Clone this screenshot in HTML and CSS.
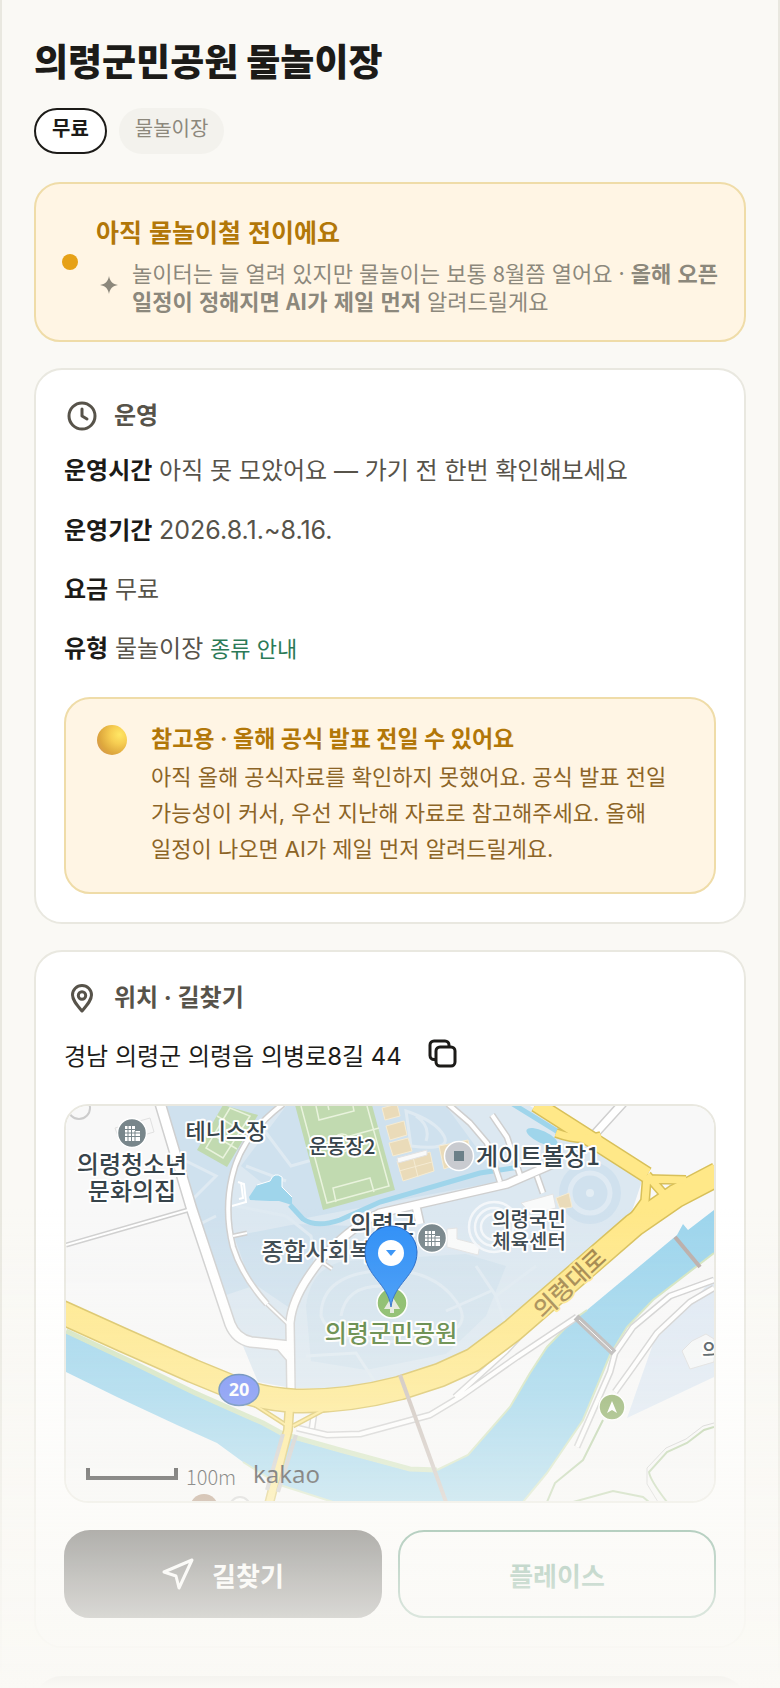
FILE: index.html
```html
<!DOCTYPE html>
<html lang="ko">
  <head>
    <meta charset="UTF-8" />
    <meta name="viewport" content="width=device-width, initial-scale=1.0" />
    <title>의령군민공원 물놀이장</title>
    <link rel="stylesheet" href="styles.css" />
  </head>
  <body>
    <main class="page">
      <h1>의령군민공원 물놀이장</h1>
      <div class="chips">
        <span class="chip chip-free">무료</span>
        <span class="chip">물놀이장</span>
      </div>

      <!-- 운영 상태 -->
      <section class="status">
        <span class="status-dot"></span>
        <div class="status-body">
          <h2>아직 물놀이철 전이에요</h2>
          <div class="status-note">
            <svg class="sparkle" viewBox="0 0 16 16" aria-hidden="true">
              <path d="M8 0C8.900 4.800 11.200 7.100 16 8C11.200 8.900 8.900 11.200 8 16C7.100 11.200 4.800 8.900 0 8C4.800 7.100 7.100 4.800 8 0Z" fill="currentColor" />
            </svg>
            <p>놀이터는 늘 열려 있지만 물놀이는 보통 8월쯤 열어요 · <b>올해 오픈 일정이 정해지면 AI가 제일 먼저</b> 알려드릴게요</p>
          </div>
        </div>
      </section>

      <!-- 운영 정보 -->
      <section class="card">
        <h2 class="card-title">
          <svg class="icon" viewBox="0 0 36 36" aria-hidden="true">
            <circle cx="18" cy="18" r="13" />
            <path d="M18 11v7l5 3" />
          </svg>
          운영
        </h2>
        <ul class="info">
          <li><b>운영시간</b> 아직 못 모았어요 — 가기 전 한번 확인해보세요</li>
          <li><b>운영기간</b> <span class="period">2026.8.1.~8.16.</span></li>
          <li><b>요금</b> 무료</li>
          <li><b>유형</b> 물놀이장 <a href="#types">종류 안내</a></li>
        </ul>
        <div class="notice">
          <span class="ball"></span>
          <div>
            <h3>참고용 · 올해 공식 발표 전일 수 있어요</h3>
            <p>아직 올해 공식자료를 확인하지 못했어요. 공식 발표 전일 가능성이 커서, 우선 지난해 자료로 참고해주세요. 올해 일정이 나오면 AI가 제일 먼저 알려드릴게요.</p>
          </div>
        </div>
      </section>

      <!-- 위치 -->
      <section class="card">
        <h2 class="card-title">
          <svg class="icon" viewBox="0 0 36 36" aria-hidden="true">
            <path d="M18 31C12.500 24.500 8.500 20 8.500 15a9.500 9.500 0 0 1 19 0C27.500 20 23.500 24.500 18 31Z" />
            <circle cx="18" cy="15.500" r="3.700" />
          </svg>
          위치 · 길찾기
        </h2>
        <div class="address">
          <span>경남 의령군 의령읍 의병로8길 44</span>
          <button type="button" class="copy" aria-label="주소 복사">
            <svg viewBox="0 0 30 30" aria-hidden="true">
              <path d="M7 20.500H6a4 4 0 0 1-4-4V6a4 4 0 0 1 4-4h11a4 4 0 0 1 4 4v1" />
              <rect x="8" y="8" width="19" height="19" rx="4" />
            </svg>
          </button>
        </div>

        <div class="map">
          <svg viewBox="0 0 648 395" role="img" aria-label="지도">
            <rect width="648" height="395" fill="#f8f8f8" />
            <!-- 공원 -->
            <path d="M95 0 126 104 157 200 172 228 192 276 226 282 271 282 334 272 377 257 411 239 447 211 564 111 577 72 464 0Z" fill="#dce8f1" />
            <path d="M98 0H215L184 27 166 71 162 97 167 141 184 181 157 190 126 104Z M230 118 290 120 254 157 228 205 184 175 168 130Z M175 60 220 0H380L435 75 240 112Z" fill="#cfe1ee" />
            <path d="M240 200Q245 160 280 155L400 148 440 160 420 210 380 248 300 264 245 255Z" fill="#d3e3ee" />
            <g fill="none" stroke="#dfeaf2" stroke-width="3">
              <path d="M120 100 150 70 120 55M150 110 130 120M195 20 225 60 260 50M180 60 220 75M220 110 245 130 250 160M170 100 220 110M255 210Q255 170 310 165T390 195 340 235 255 210ZM275 210Q280 178 320 180M240 250 290 247 315 285M410 160 430 190 470 160M425 185 380 205M430 190 440 220M340 5Q370 15 378 30T345 40ZM350 10Q365 20 360 35" />
            </g>
            <circle cx="524" cy="87" r="31" fill="#d0e1ee" />
            <circle cx="524" cy="87" r="20" fill="none" stroke="#dfeaf3" stroke-width="5" />
            <circle cx="524" cy="87" r="4" fill="#e3edf4" />
            <path d="M561 312 648 271V171L626 196 588 235Z" fill="#dfe9f4" />
            <!-- 강과 개울 -->
            <path d="M0 227 66 258 127 288 197 319 217 330 274 346 344 365 371 364 402 349 444 301 464 267 481 241 507 214 521 204 611 129 617 118 622 124 648 104V147L587 194 561 221 544 249 517 314 481 367 457 396H267L214 379 177 356 151 337 111 319 51 291 0 266Z" fill="#9dd5ed" />
            <path d="M0 225 66 256 127 286 197 317 217 328 274 344 344 363 371 364" fill="none" stroke="#d2e4be" stroke-width="5" />
            <path d="M371 364 402 349 444 301 464 267 481 241 507 214 521 204M648 147 587 194 561 221 544 249 517 314 481 367 457 396M177 356 214 379 267 396" fill="none" stroke="#d2e4be" stroke-width="2" />
            <path d="M224 99 237 113Q250 122 274 114L314 96 414 67 454 61M447 -2 502 32" fill="none" stroke="#9fd5eb" stroke-width="5" />
            <path d="M183 91 191 79 204 75Q208 65 216 71L216 81 226 91V99L213 95 204 95 184 94Z" fill="#9fd5eb" />
            <path d="M191 79 204 75Q208 65 216 71L216 81 226 91" fill="none" stroke="#fff" stroke-width="1" />
            <ellipse cx="476" cy="31" rx="17" ry="6" transform="rotate(25 476 31)" fill="#9fd5eb" />
            <!-- 운동장, 코트 -->
            <path d="M229 -1H306L329 84 257 104Z" fill="#c1dab0" />
            <g fill="none" stroke="#e9f3dd" stroke-width="1.500">
              <path d="M235 0 261 97 323 80 301 0M240 42 313 22M250 0 253 14 288 5 287 0M262 0 263 4M270 96 267 82 304 72 308 86" />
              <circle cx="276" cy="37" r="9" />
            </g>
            <path d="M157 -1 192 9 161 61 131 44Z" fill="#c1dab0" />
            <path d="M151 10 181 28M142 26 171 43M164 2 140 42 157 52 184 10Z" fill="none" stroke="#e9f3dd" stroke-width="1.500" />
            <g fill="#eadbb9" stroke="#f5ebd3" stroke-width="1">
              <path d="M316 2 331 -2 334 10 319 14ZM320 20 338 15 341 29 324 34ZM323 37 342 32 346 45 327 50ZM331 55 364 46 368 65 337 75ZM373 40 402 34 406 53 378 63ZM490 92 503 87 506 101 494 103Z" />
              <path d="M333 65 366 56M347 51 352 71" fill="none" />
            </g>
            <path d="M331 52 361 44V49L332 57ZM455 97 487 88 490 102 465 108ZM381 123 391 122V133L414 139 412 149 381 141Z" fill="#f9fafa" stroke="#e3e3e3" stroke-width="1" />
            <g fill="none" stroke="#f4f7fa" stroke-width="2.500">
              <circle cx="428" cy="121" r="25" />
              <circle cx="428" cy="121" r="19" />
              <circle cx="428" cy="121" r="13" />
            </g>
            <path d="M172 76 178 78 180 96 166 100M175 76 177 92 173 93" fill="none" stroke="#fff" stroke-width="2" />
            <path d="M49 22 84 12 88 26 54 36Z" fill="none" stroke="#e0e0e0" />
            <circle cx="13" cy="2" r="11" fill="none" stroke="#ccc" stroke-width="2" />
            <!-- 도로 -->
            <g class="road-edge">
              <g id="lanes">
                <path class="w8" d="M94 -3 126 104 158 200 164 218Q170 233 185 236L224 240" />
                <path class="w3" d="M0 139 122 104M201 198 222 218M167 130 181 127M256 156 266 163" />
                <path class="w4" d="M217 -2Q175 30 166 71 158 105 167 141 176 170 201 198M382 -2 404 17 421 37 434 76M426 9 441 31 454 69M471 70 477 87" />
                <path class="w6" d="M494 55 441 78 314 107Q280 124 254 155 226 190 224 217L225 285M350 100 354 118M527 30 557 -3M212 238 224 252" />
                <path class="w4" d="M231 322 261 329 294 328 364 309 394 291 451 251 511 211M389 291 440 245 452 232M248 308 246 322M511 341 544 266 549 247 567 221 604 190 648 174M549 286 567 261 591 227 624 196 648 182" />
              </g>
            </g>
            <g class="road">
              <use href="#lanes" />
            </g>
            <g class="highway-edge">
              <g id="highways">
                <path class="w22" d="M-5 206 57 234 127 265 171 283Q195 293 230 295 280 296 334 282L374 269 407 254 447 224 568 119 610 90 652 68" />
                <path class="w12" d="M470 -2 520 30 581 69" />
                <path class="w6" d="M581 69 602 93M581 73 620 74M581 70 579 95 564 116M490 27Q515 36 535 30" />
                <path class="w6" d="M224 294 222 324 203 398" />
                <path class="w3" d="M189 299 220 319M227 320 261 302" />
              </g>
            </g>
            <g class="highway">
              <use href="#highways" />
            </g>
            <path d="M217 328 201 384M230 329 212 386" stroke="#c9c7c6" stroke-width="4" />
            <path d="M510 211 548 247" stroke="#b4b2b2" stroke-width="7" />
            <path d="M513 214 546 245" stroke="#fff" stroke-width="1" />
            <path d="M609 131 634 161" stroke="#b9aca8" stroke-width="4" />
            <path d="M334 269 380 396" stroke="#c9beb7" stroke-width="4" />
            <g fill="none" stroke="#b5cfa2" stroke-width="2">
              <path d="M537 314 517 354 489 377 481 396M507 396 547 385 577 391 583 396M648 321 638 324 621 337 601 346 583 366Q584 374 601 396" />
              <path d="M648 317 637 320 620 333 600 342 581 362V378L592 396" stroke="#ccc" stroke-width="1" />
            </g>
            <path d="M616 245 626 235 640 228 648 233V256L624 263Z" fill="#f5f7f8" stroke="#ddd" />
            <circle cx="138" cy="402" r="14" fill="#a98468" />
            <circle cx="174" cy="401" r="10" fill="#fff" stroke="#ccc" stroke-width="2" />
            <!-- 지명 -->
            <g class="label">
              <text x="160" y="33" font-size="22" text-anchor="middle">테니스장</text>
              <text x="66" y="67" font-size="24" text-anchor="middle">의령청소년</text>
              <text x="66" y="94" font-size="24" text-anchor="middle">문화의집</text>
              <text x="276" y="48" font-size="20" text-anchor="middle">운동장2</text>
              <text x="472" y="59" font-size="24" text-anchor="middle">게이트볼장1</text>
              <text x="350" y="127" font-size="24" text-anchor="end">의령군</text>
              <text x="350" y="154" font-size="24" text-anchor="end">종합사회복지관</text>
              <text x="463" y="121" font-size="20" text-anchor="middle">의령국민</text>
              <text x="463" y="143" font-size="20" text-anchor="middle">체육센터</text>
              <text x="636" y="252" font-size="20">의</text>
              <text class="label-park" x="325" y="236" font-size="24" text-anchor="middle">의령군민공원</text>
              <text class="label-road" x="504" y="186" font-size="24" text-anchor="middle" transform="rotate(-43 504 178)">의령대로</text>
            </g>
            <!-- 마커 -->
            <g stroke="#fff" stroke-width="1.500">
              <circle cx="66" cy="27" r="14.500" fill="#78868b" />
              <circle cx="366" cy="132" r="14.500" fill="#78868b" />
              <circle cx="393" cy="50" r="14.500" fill="#c9cbd0" />
              <circle cx="326" cy="197" r="15" fill="#80b75e" />
              <circle cx="546" cy="301" r="13" fill="#8bac62" />
            </g>
            <g id="building">
              <path d="M59 20H69V25H74V35H59Z" fill="#fff" />
              <path d="M62 20V35M65.500 20V35M69 25V35M59 23.500H69M59 27H74M59 30.500H74" stroke="#78868b" stroke-width="1" />
            </g>
            <use href="#building" x="300" y="105" />
            <rect x="388" y="45" width="10" height="10" fill="#6c8088" />
            <path d="M546 295 551 307 546 304 541 307Z" fill="#fff" />
            <path d="M326 190 334 203H328V207H324V203H318Z" fill="#e3e8dc" />
            <path d="M325 201C322 177 299 170 299 146A26 26 0 0 1 351 146C351 170 328 177 325 201Z" fill="#2e8ff7" stroke="#1b63c4" stroke-width="1" />
            <circle cx="325" cy="147" r="13" fill="#fff" />
            <path d="M320 144H330L325 150Z" fill="#2e8ff7" />
            <ellipse cx="173" cy="284" rx="20" ry="15.500" fill="#6a85f5" stroke="#4a76ad" stroke-width="1.500" />
            <text class="route" x="173" y="290" font-size="18" text-anchor="middle">20</text>
            <path d="M22 362V372H110V362" fill="none" stroke="#111" stroke-width="4" />
            <text class="scale" x="120" y="379" font-size="20">100m</text>
            <text class="brand" x="187" y="377" font-size="24">kakao</text>
          </svg>
        </div>

        <div class="actions">
          <button type="button" class="button button-main">
            <svg viewBox="0 0 32 32" aria-hidden="true">
              <path d="M30 2 17 30 14 18 2 14Z" />
            </svg>
            길찾기
          </button>
          <button type="button" class="button button-place">플레이스</button>
        </div>
      </section>
      <div class="sheet"></div>
    </main>
    <div class="fade"></div>
  </body>
</html>
```
FILE: styles.css
```css
* {
  box-sizing: border-box;
}
body {
  margin: 0;
  background-color: #faf9f5;
  color: #1c1b18;
  font-family: Inter, "Noto Sans CJK KR", sans-serif;
  font-size: 24px;
  line-height: 36px;
  word-break: keep-all;
}
h1,
h2,
h3,
p,
ul {
  margin: 0;
  padding: 0;
}
.page {
  height: 100vh;
  padding: 37px 32px 0;
  border: solid #e9e8e0;
  border-width: 0 2px;
  overflow: hidden;
}
h1 {
  font-size: 37px;
  line-height: 52px;
  font-weight: 800;
}
.chips {
  display: flex;
  gap: 12px;
  margin: 19px 0 28px;
}
.chip {
  height: 46px;
  padding: 0 16px;
  border-radius: 23px;
  background-color: #f3f2ed;
  color: #8c887c;
  font-size: 20px;
  line-height: 42px;
}
.chip-free {
  border: 2px solid #1c1b18;
  background-color: #fff;
  color: #1c1b18;
  font-weight: 700;
  line-height: 38px;
}

/* 운영 상태 */
.status {
  display: flex;
  align-items: center;
  gap: 18px;
  padding: 0 26px;
  border: 2px solid #efdca8;
  border-radius: 26px;
  background-color: #fff5e4;
  font-family: "Noto Sans CJK KR", sans-serif;
}
.status-dot {
  flex: none;
  width: 16px;
  height: 16px;
  border-radius: 50%;
  background-color: #e6a117;
}
.status-body {
  padding: 29px 0 26px;
}
.status h2 {
  color: #b27708;
  font-size: 25px;
  line-height: 36px;
}
.status-note {
  display: flex;
  align-items: flex-start;
  gap: 14px;
  margin-top: 9px;
  padding-left: 4px;
  color: #8c887c;
  font-size: 22px;
  line-height: 28px;
}
.sparkle {
  flex: none;
  width: 18px;
  height: 18px;
  margin-top: 18px;
}

/* 카드 */
.card {
  margin-top: 26px;
  padding: 28px;
  border: 2px solid #e9e8e0;
  border-radius: 28px;
  background-color: #fff;
}
.card-title {
  display: flex;
  align-items: center;
  gap: 14px;
  color: #57534a;
  font-size: 24px;
  line-height: 36px;
}
.icon {
  width: 36px;
  height: 36px;
  fill: none;
  stroke: currentColor;
  stroke-width: 3px;
  stroke-linecap: round;
  stroke-linejoin: round;
}
.info {
  display: grid;
  gap: 23px;
  margin-top: 19px;
  color: #57534a;
  list-style: none;
}
.info b {
  color: #1c1b18;
}
.info a {
  color: #2b7a57;
  font-size: 22px;
  text-decoration: none;
}
.period {
  font-size: 25px;
}
.notice {
  display: flex;
  gap: 24px;
  margin-top: 30px;
  padding: 22px 36px 25px 31px;
  border: 2px solid #efdca8;
  border-radius: 26px;
  background-color: #fff5e4;
}
.ball {
  flex: none;
  width: 30px;
  height: 30px;
  margin-top: 4px;
  border-radius: 50%;
  background: radial-gradient(circle at 75% 32%, #ffe765 0, #f7ce52 30%, #dea83d 65%, #cf8a58 100%);
}
.notice h3 {
  color: #b27708;
  font-size: 23px;
  line-height: 36px;
}
.notice p {
  margin-top: 2px;
  color: #8c6426;
  font-size: 22px;
  line-height: 36px;
}

/* 위치 */
.address {
  display: flex;
  align-items: flex-start;
  gap: 26px;
  margin-top: 23px;
}
.copy {
  padding: 0;
  border: 0;
  background: none;
  color: #1c1b18;
}
.copy svg {
  display: block;
  width: 30px;
  height: 30px;
  fill: none;
  stroke: currentColor;
  stroke-width: 3px;
  stroke-linecap: round;
}
.map {
  margin-top: 29px;
  border: 2px solid #e9e8e0;
  border-radius: 24px;
  overflow: hidden;
}
.map svg {
  display: block;
  width: 100%;
}
.road-edge,
.road,
.highway-edge,
.highway {
  --edge: 0px;
  fill: none;
  stroke-linejoin: round;
}
.road-edge,
.highway-edge {
  --edge: 3px;
}
.road-edge {
  stroke: #cfcfcf;
}
.road {
  stroke: #fff;
}
.highway-edge {
  stroke: #d8c05a;
}
.highway {
  stroke: #ffe888;
}
.w3 {
  stroke-width: calc(2px + var(--edge));
}
.w4 {
  stroke-width: calc(4px + var(--edge));
}
.w6 {
  stroke-width: calc(7px + var(--edge));
}
.w8 {
  stroke-width: calc(9px + var(--edge));
}
.w12 {
  stroke-width: calc(14px + var(--edge));
}
.w22 {
  stroke-width: calc(22px + var(--edge));
}
.label {
  fill: #37444b;
  stroke: #fff;
  stroke-width: 4px;
  stroke-linejoin: round;
  paint-order: stroke;
  font-family: "Noto Sans CJK KR", sans-serif;
  font-weight: 500;
}
.label-park {
  fill: #4d7a2e;
}
.label-road {
  fill: #a18345;
  stroke: #ffe888;
}
.route {
  fill: #fff;
  font-family: "Noto Sans", sans-serif;
  font-weight: 700;
}
.scale {
  fill: #111;
  font-family: "Noto Sans CJK KR", sans-serif;
  font-weight: 300;
}
.brand {
  fill: #111;
  font-family: "Noto Sans", sans-serif;
}
.actions {
  display: grid;
  grid-template-columns: 1fr 1fr;
  gap: 16px;
  margin-top: 27px;
}
.button {
  display: flex;
  align-items: center;
  justify-content: center;
  gap: 18px;
  height: 88px;
  border: 2px solid #2b7a57;
  border-radius: 26px;
  background-color: #fff;
  color: #2b7a57;
  font-family: inherit;
  font-size: 26px;
  font-weight: 700;
}
.button-main {
  border-color: #1c1b18;
  background-color: #1c1b18;
  color: #fff;
}
.button svg {
  width: 32px;
  height: 32px;
  fill: none;
  stroke: currentColor;
  stroke-width: 3px;
  stroke-linejoin: round;
}
.sheet {
  position: relative;
  z-index: 2;
  height: 60px;
  margin-top: 28px;
  border-radius: 28px;
  background: linear-gradient(#f4f3ef, #faf9f5 12px);
}

/* 하단 페이드 */
.fade {
  position: fixed;
  right: 0;
  bottom: 0;
  left: 0;
  height: 480px;
  background: linear-gradient(rgba(250, 249, 245, 0), rgba(250, 249, 245, 0.3) 38%, rgba(250, 249, 245, 0.52) 56%, rgba(250, 249, 245, 0.67) 67%, #faf9f5);
  pointer-events: none;
}
```
